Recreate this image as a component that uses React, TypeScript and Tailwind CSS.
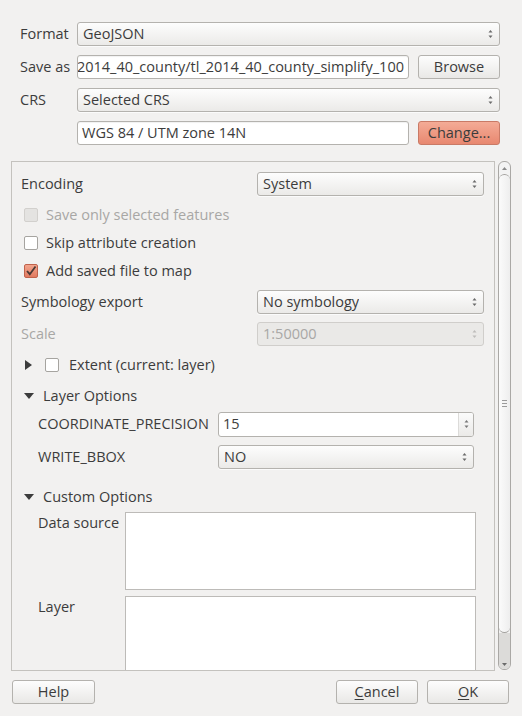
import type { ReactNode } from "react"

const TEXT = "text-[#3c3c3c]"

function UpDown({ color = "#6a6a6a" }: { color?: string }) {
  return (
    <svg width="7" height="12" viewBox="0 0 7 12" className="shrink-0">
      <path d="M1.5 4.5 L3.5 2 L5.5 4.5 Z" fill={color} />
      <path d="M1.5 7.5 L3.5 10 L5.5 7.5 Z" fill={color} />
    </svg>
  )
}

function Combo({ value, className = "" }: { value: string; className?: string }) {
  return (
    <div
      className={`flex h-[24px] items-center justify-between rounded-[3px] border border-[#b4b2ae] bg-linear-to-b from-[#fdfdfd] to-[#ebeae8] pl-[5px] pr-[5px] shadow-[0_1px_0_#fbfbfb] ${className}`}
    >
      <span className="truncate">{value}</span>
      <UpDown />
    </div>
  )
}

function LineEdit({ children, className = "" }: { children: ReactNode; className?: string }) {
  return (
    <div
      className={`flex h-[24px] items-center overflow-hidden whitespace-nowrap rounded-[3px] border border-[#b4b2ae] bg-white px-[4px] shadow-[inset_0_1px_1px_rgba(0,0,0,0.06)] ${className}`}
    >
      {children}
    </div>
  )
}

function Button({ children, className = "", accent = false }: { children: ReactNode; className?: string; accent?: boolean }) {
  return (
    <div
      className={`flex h-[24px] items-center justify-center rounded-[3px] border ${
        accent
          ? "border-[#c97a66] bg-linear-to-b from-[#f4ab96] to-[#e88870]"
          : "border-[#b4b2ae] bg-linear-to-b from-[#fdfdfd] to-[#e9e8e6]"
      } ${className}`}
    >
      {children}
    </div>
  )
}

function Check({ state }: { state: "off" | "on" | "disabled" }) {
  if (state === "on") {
    return (
      <div className="flex h-[14px] w-[14px] shrink-0 items-center justify-center rounded-[2px] border border-[#c0634c] bg-linear-to-b from-[#f3a58d] to-[#e17a60]">
        <svg width="12" height="12" viewBox="0 0 12 12">
          <path d="M2 6 L4.8 9.2 L10.5 1.5" fill="none" stroke="#4a3a36" strokeWidth="1.8" />
        </svg>
      </div>
    )
  }
  if (state === "disabled") {
    return <div className="h-[14px] w-[14px] shrink-0 rounded-[2px] border border-[#d2d0cd] bg-[#e4e3e1]" />
  }
  return <div className="h-[14px] w-[14px] shrink-0 rounded-[2px] border border-[#a6a4a0] bg-white" />
}

function TriRight() {
  return (
    <svg width="7" height="10" viewBox="0 0 7 10" className="block shrink-0">
      <path d="M0 0 L7 5 L0 10 Z" fill="#3c3c3c" />
    </svg>
  )
}

function TriDown() {
  return (
    <svg width="10" height="6" viewBox="0 0 10 6" className="block shrink-0">
      <path d="M0 0 L10 0 L5 6 Z" fill="#3c3c3c" />
    </svg>
  )
}

function Scrollbar() {
  return (
    <div className="ml-[3px] flex h-[509px] w-[13px] flex-col overflow-hidden rounded-[6px] border border-[#aaa8a5] bg-[#f3f3f3]">
      <div className="flex h-[12px] shrink-0 items-center justify-center">
        <svg width="5" height="3" viewBox="0 0 5 3">
          <path d="M0 3 L2.5 0 L5 3 Z" fill="#8a8a8a" />
        </svg>
      </div>
      <div className="flex h-[459px] shrink-0 items-center justify-center rounded-[6px] border-y border-[#a3a19e] bg-linear-to-r from-[#fbfbfb] to-[#eeeeee]">
        <div className="flex flex-col gap-[2px]">
          <div className="h-px w-[5px] bg-[#9a9a9a]" />
          <div className="h-px w-[5px] bg-[#9a9a9a]" />
          <div className="h-px w-[5px] bg-[#9a9a9a]" />
        </div>
      </div>
      <div className="flex flex-1 flex-col items-center justify-end bg-[#dcdbd9] pb-[3px]">
        <svg width="5" height="3" viewBox="0 0 5 3">
          <path d="M0 0 L5 0 L2.5 3 Z" fill="#6a6a6a" />
        </svg>
      </div>
    </div>
  )
}

export default function App() {
  return (
    <div className={`h-[716px] w-[522px] overflow-hidden bg-[#f2f1f0] font-['Open_Sans',sans-serif] text-[14.5px] ${TEXT}`}>
      {/* top form */}
      <div className="flex flex-col gap-[9px] pl-[20px] pr-[22px] pt-[22px]">
        <div className="flex h-[24px] items-center">
          <span className="w-[57px] shrink-0">Format</span>
          <Combo value="GeoJSON" className="flex-1" />
        </div>
        <div className="flex h-[24px] items-center">
          <span className="w-[57px] shrink-0">Save as</span>
          <LineEdit className="w-[332px] shrink-0 justify-end">
            <span>2014_40_county/tl_2014_40_county_simplify_100</span>
          </LineEdit>
          <Button className="ml-[9px] flex-1">Browse</Button>
        </div>
        <div className="flex h-[24px] items-center">
          <span className="w-[57px] shrink-0">CRS</span>
          <Combo value="Selected CRS" className="flex-1" />
        </div>
        <div className="flex h-[24px] items-center">
          <span className="w-[57px] shrink-0" />
          <LineEdit className="w-[332px] shrink-0">WGS 84 / UTM zone 14N</LineEdit>
          <Button accent className="ml-[9px] flex-1">Change...</Button>
        </div>
      </div>

      {/* scroll area */}
      <div className="ml-[11px] mt-[16px] flex h-[510px]">
        <div className="flex h-[510px] w-[484px] flex-col overflow-hidden border border-[#c4c2be] pt-[10px]">
          <div className="flex h-[24px] shrink-0 items-center justify-between pl-[9px] pr-[10px]">
            <span>Encoding</span>
            <Combo value="System" className="w-[227px]" />
          </div>

          <div className="mt-[5px] flex h-[28px] shrink-0 items-center pl-[12px]">
            <Check state="disabled" />
            <span className="ml-[8px] text-[#a8a7a5]">Save only selected features</span>
          </div>
          <div className="flex h-[28px] shrink-0 items-center pl-[12px]">
            <Check state="off" />
            <span className="ml-[8px]">Skip attribute creation</span>
          </div>
          <div className="flex h-[28px] shrink-0 items-center pl-[12px]">
            <Check state="on" />
            <span className="ml-[8px]">Add saved file to map</span>
          </div>

          <div className="mt-[5px] flex h-[24px] shrink-0 items-center justify-between pl-[9px] pr-[10px]">
            <span>Symbology export</span>
            <Combo value="No symbology" className="w-[227px]" />
          </div>

          <div className="mt-[8px] flex h-[24px] shrink-0 items-center justify-between pl-[9px] pr-[10px]">
            <span className="text-[#a8a7a5]">Scale</span>
            <div className="flex h-[24px] w-[227px] items-center justify-between rounded-[3px] border border-[#d0cecb] bg-[#eae9e7] pl-[5px] pr-[5px] text-[#a8a7a5]">
              <span>1:50000</span>
              <UpDown color="#bdbcba" />
            </div>
          </div>

          <div className="mt-[6px] flex h-[26px] shrink-0 items-center gap-[13px] pl-[13px]">
            <TriRight />
            <div className="flex items-center gap-[10px]">
              <Check state="off" />
              <span>Extent (current: layer)</span>
            </div>
          </div>

          <div className="mt-[5px] flex h-[26px] shrink-0 items-center gap-[9px] pl-[12px]">
            <TriDown />
            <span>Layer Options</span>
          </div>

          <div className="mt-[3px] flex h-[24px] shrink-0 items-center pl-[26px]">
            <span className="w-[180px] shrink-0">COORDINATE_PRECISION</span>
            <div className="flex h-[25px] w-[256px] items-stretch overflow-hidden rounded-[3px] border border-[#b4b2ae] bg-white">
              <span className="flex flex-1 items-center pl-[4px]">15</span>
              <div className="flex w-[15px] items-center justify-center border-l border-[#dcdbd9] bg-linear-to-b from-[#fbfbfb] to-[#ebeae8]">
                <UpDown color="#777777" />
              </div>
            </div>
          </div>

          <div className="mt-[9px] flex h-[24px] shrink-0 items-center pl-[26px]">
            <span className="w-[180px] shrink-0">WRITE_BBOX</span>
            <Combo value="NO" className="w-[256px]" />
          </div>

          <div className="mt-[15px] flex h-[26px] shrink-0 items-center gap-[9px] pl-[12px]">
            <TriDown />
            <span>Custom Options</span>
          </div>

          <div className="mt-[2px] flex shrink-0 pl-[26px]">
            <span className="w-[87px] shrink-0">Data source</span>
            <div className="h-[78px] w-[351px] border border-[#bdbbb8] bg-white" />
          </div>

          <div className="mt-[6px] flex shrink-0 pl-[26px]">
            <span className="w-[87px] shrink-0">Layer</span>
            <div className="h-[100px] w-[351px] border border-[#bdbbb8] bg-white" />
          </div>
        </div>
        <Scrollbar />
      </div>

      {/* buttons */}
      <div className="mt-[9px] flex items-center pl-[12px] pr-[13px]">
        <Button className="w-[83px]">Help</Button>
        <div className="flex-1" />
        <Button className="w-[82px]">
          <span>
            <span className="underline underline-offset-2">C</span>ancel
          </span>
        </Button>
        <Button className="ml-[9px] w-[82px]">
          <span>
            <span className="underline underline-offset-2">O</span>K
          </span>
        </Button>
      </div>
    </div>
  )
}
